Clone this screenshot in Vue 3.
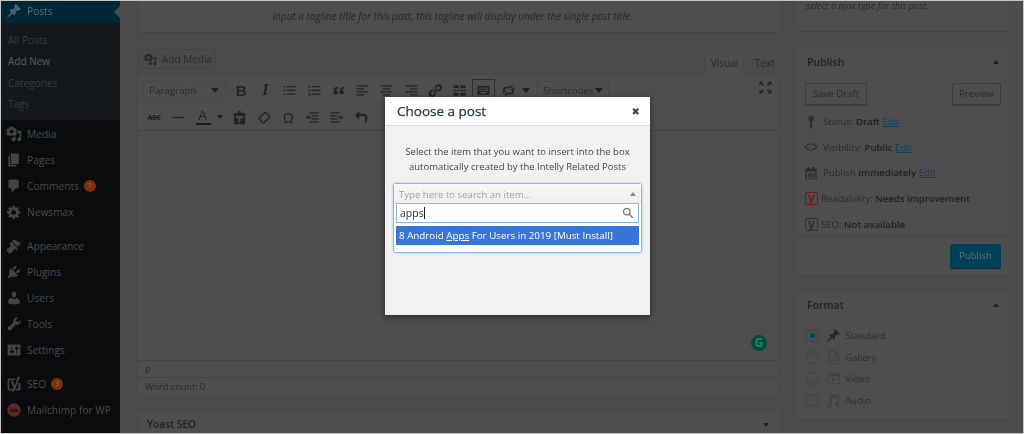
<script setup>
const d = {
  pin: 'M10.44 3.02l1.82-1.82 6.36 6.35-1.83 1.82c-1.05-.68-2.48-.57-3.41.36l-.75.75c-.92.93-1.04 2.35-.35 3.41l-1.83 1.82-2.41-2.41-2.8 2.79c-.42.42-3.38 2.71-3.8 2.29s1.86-3.39 2.28-3.81l2.79-2.79L4.1 9.36l1.83-1.82c1.05.69 2.48.57 3.41-.36l.75-.75c.93-.92 1.04-2.35.35-3.41z',
  media: 'M13 11V4c0-.55-.45-1-1-1h-1.67L9 1H5L3.67 3H2c-.55 0-1 .45-1 1v7c0 .55.45 1 1 1h10c.55 0 1-.45 1-1zM7 4.5c1.38 0 2.5 1.12 2.5 2.5S8.38 9.5 7 9.5 4.5 8.38 4.5 7 5.62 4.5 7 4.5zM14 6h5v10.5c0 1.38-1.12 2.5-2.5 2.5S14 17.88 14 16.5s1.12-2.5 2.5-2.5c.17 0 .34.02.5.05V9h-3V6zm-4 8.05V13h2v3.5c0 1.38-1.12 2.5-2.5 2.5S7 17.88 7 16.5 8.12 14 9.5 14c.17 0 .34.02.5.05z',
  pages: 'M6 15V2h10v13H6zm-1 1h8v2H3V5h2v11z',
  comments: 'M5 2h9c1.1 0 2 .9 2 2v7c0 1.1-.9 2-2 2h-2l-5 5v-5H5c-1.1 0-2-.9-2-2V4c0-1.1.9-2 2-2z',
  gear: 'M18 12h-2.18c-.17.7-.44 1.35-.81 1.93l1.54 1.54-2.1 2.1-1.54-1.54c-.58.36-1.23.63-1.91.79V19H8v-2.18c-.68-.16-1.33-.43-1.91-.79l-1.54 1.54-2.12-2.12 1.54-1.54c-.36-.58-.63-1.23-.79-1.91H1V9.03h2.17c.16-.7.44-1.35.8-1.94L2.43 5.55l2.1-2.1 1.54 1.54c.58-.37 1.24-.64 1.93-.81V2h3v2.18c.68.16 1.33.43 1.91.79l1.54-1.54 2.12 2.12-1.54 1.54c.36.59.64 1.24.8 1.94H18V12zm-8.5 1.5c1.66 0 3-1.34 3-3s-1.34-3-3-3-3 1.34-3 3 1.34 3 3 3z',
  brush: 'M14.48 11.06L7.41 3.99l1.5-1.5c.5-.56 2.3-.47 3.51.32 1.21.8 1.43 1.28 2.91 2.1 1.18.64 2.45 1.26 4.45.85zm-.71.71L6.7 4.7 4.93 6.47c-.39.39-.39 1.02 0 1.41l1.06 1.06c.39.39.39 1.03 0 1.42-.6.6-1.43 1.11-2.21 1.69-.35.26-.7.53-1.01.84C1.43 13.23.4 14.08 1.2 15.8c.8 1.7 1.6 2.5 3.3 3.3s2.26-.6 3.56-1.9c.3-.3.57-.66.83-1.01.57-.8 1.08-1.62 1.69-2.22.39-.39 1.02-.39 1.41 0l1.06 1.06c.39.39 1.02.39 1.41 0z',
  plug: 'M13.11 4.36L9.87 7.6 8 5.73l3.24-3.24c.35-.34 1.05-.2 1.56.32.52.51.66 1.21.31 1.55zm-8 1.77l.91-1.12 9.01 9.01-1.19.84c-.71.71-2.63 1.16-3.82 1.16H6.14L4.9 17.26c-.59.59-1.54.59-2.12 0-.59-.58-.59-1.53 0-2.12l1.24-1.24v-3.88c0-1.13.4-3.19 1.09-3.89zm7.26 3.97l3.24-3.24c.34-.35 1.04-.21 1.55.31.52.51.66 1.21.31 1.55l-3.24 3.25z',
  user: 'M10 9.25c-2.27 0-2.73-3.44-2.73-3.44C7 4.02 7.82 2 9.97 2c2.16 0 2.98 2.02 2.71 3.81 0 0-.41 3.44-2.68 3.44zm0 2.57L12.72 10c2.39 0 4.52 2.33 4.52 4.53v2.49s-3.65 1.13-7.24 1.13c-3.65 0-7.24-1.13-7.24-1.13v-2.49c0-2.25 1.94-4.48 4.47-4.48z',
  wrench: 'M16.68 9.77c-1.34 1.34-3.3 1.67-4.95.99l-5.41 6.52c-.99.99-2.59.99-3.58 0s-.99-2.59 0-3.57l6.52-5.42c-.68-1.65-.35-3.61.99-4.95 1.28-1.28 3.12-1.62 4.72-1.06l-2.89 2.89 2.82 2.82 2.86-2.87c.53 1.58.18 3.39-1.08 4.65z',
  settings: 'M18 16V4c0-.55-.45-1-1-1H3c-.55 0-1 .45-1 1v12c0 .55.45 1 1 1h14c.55 0 1-.45 1-1zM8 11h1c.55 0 1 .45 1 1s-.45 1-1 1H8v1.5c0 .28-.22.5-.5.5s-.5-.22-.5-.5V13H6c-.55 0-1-.45-1-1s.45-1 1-1h1V5.5c0-.28.22-.5.5-.5s.5.22.5.5V11zm5-2h-1c-.55 0-1-.45-1-1s.45-1 1-1h1V5.5c0-.28.22-.5.5-.5s.5.22.5.5V7h1c.55 0 1 .45 1 1s-.45 1-1 1h-1v5.5c0 .28-.22.5-.5.5s-.5-.22-.5-.5V9z',
  yoast: 'M2 4.500C2 3.700 2.700 3 3.500 3H12l-.8 2H4v11h4.500l-1 2h-4C2.700 18 2 17.300 2 16.500zM14.200 1h3.300L11.500 16.500C10.800 18.300 9.300 19.500 7.500 19.500v-2.800c1 0 1.700-.5 2-1.300L5.500 6h3.100l2.500 6.500zM15.500 8.500H18v8c0 .8-.7 1.500-1.500 1.500H12v-2h3.500z',
  mc: 'M10 1.500a8.500 8.500 0 1 0 0 17 8.500 8.500 0 0 0 0-17zM4.500 13l2-5 2 3.500L10.500 7.500l1.500 3.500 1.500-2 2.500 3-1 .5-1.500-1.500-1.500 2-1.500-3-2 3.500-2-3.500-1.500 3.500z',
  ul: 'M2 4h2v2H2zM6 4h12v1.600H6zM2 9h2v2H2zM6 9h12v1.600H6zM2 14h2v2H2zM6 14h12v1.600H6z',
  ol: 'M2 3h1.500v3.500H2zM6 4h12v1.600H6zM2 9h2.500v1H3v.5h1.500v1H2zM6 9h12v1.600H6zM2 14h2.500v3.500H2v-1h1.500v-.3H2v-.9h1.500V15H2zM6 14h12v1.600H6z',
  quote: 'M9 5v2.500C6.800 8 6.500 9.200 6.500 10H9v5H3.500v-5C3.500 7 5.500 5 9 5zm8 0v2.500c-2.200.5-2.500 1.700-2.500 2.500H17v5h-5.500v-5C11.500 7 13.500 5 17 5z',
  left: 'M2 3h16v1.800H2zM2 7h10v1.800H2zM2 11h16v1.800H2zM2 15h10v1.800H2z',
  center: 'M2 3h16v1.800H2zM5 7h10v1.800H5zM2 11h16v1.800H2zM5 15h10v1.800H5z',
  right: 'M2 3h16v1.800H2zM8 7h10v1.800H8zM2 11h16v1.800H2zM8 15h10v1.800H8z',
  link: 'M17.740 2.760c1.680 1.690 1.680 4.410 0 6.100l-1.530 1.520c-1.120 1.130-2.700 1.510-4.130 1.160l2.240-2.240.96-.96c.92-.92.92-2.410 0-3.330s-2.410-.92-3.330 0l-.96.96-2.240 2.240c-.35-1.430.03-3.010 1.160-4.130l1.520-1.530c1.690-1.680 4.410-1.680 6.100 0zM8.170 13.300l5.130-5.130-1.470-1.470-5.130 5.130zM2.260 17.240c-1.680-1.690-1.680-4.410 0-6.100l1.530-1.520c1.120-1.130 2.700-1.510 4.130-1.160l-2.240 2.240-.96.96c-.92.92-.92 2.410 0 3.330s2.410.92 3.330 0l.96-.96 2.240-2.240c.35 1.430-.03 3.010-1.160 4.130l-1.520 1.530c-1.690 1.680-4.410 1.680-6.100 0z',
  more: 'M2 3h7v4H2zM11 3h7v4h-7zM1 9.200h18v1.600H1zM2 13h7v4H2zM11 13h7v4h-7z',
  kitchen: 'M2 4h16v12H2zM4 6v1.500h2V6zM7 6v1.500h2V6zM10 6v1.500h2V6zM13 6v1.500h3V6zM4 9v1.500h2V9zM7 9v1.500h2V9zM10 9v1.500h2V9zM13 9v1.500h3V9zM6 12v2h8v-2z',
  loop: 'M3 12V7.500C3 6.100 4.100 5 5.500 5H13V2.500l4.500 3.500L13 9.500V7H5.500v5h2.200L4.200 16 1 12zM17 8v4.500c0 1.400-1.100 2.500-2.500 2.500H7v2.500L2.500 14 7 10.500V13h7.500V8h-2.200L15.800 4 19 8z',
  hr: 'M2 9h16v2H2z',
  paste: 'M8 1.500h4v2.500h4.500c.6 0 1 .4 1 1v13c0 .6-.4 1-1 1h-13c-.6 0-1-.4-1-1V5c0-.6.4-1 1-1H8zM5 8v3h4v6h2v-6h4V8z',
  eraser: 'M12.500 2.500 17.500 7.500c.8.8.8 2 0 2.800L10 17.800c-.8.800-2 .800-2.800 0l-5-5c-.8-.8-.8-2 0-2.800L9.700 2.500c.8-.8 2-.8 2.800 0zM11.100 3.900 3.600 11.400l5 5 7.500-7.500z',
  outdent: 'M6 3h12v1.800H6zM9 7h9v1.800H9zM1 10l4-3v2h3v1.800H5v2zM9 11h9v1.800H9zM6 15h12v1.800H6z',
  indent: 'M2 3h12v1.800H2zM2 7h9v1.800H2zM19 10l-4-3v2h-3v1.800h3v2zM2 11h9v1.800H2zM2 15h12v1.800H2z',
  undo: 'M12 5H7V1.500L1 7l6 5.500V8h5c2 0 3 1.500 3 3.500 0 2-.5 4.500-1 6.500 3-2 4-5 4-7.500C18 7.500 15.500 5 12 5z',
  full: 'M2 2h5L5.300 3.700 8 6.500 6.500 8 3.700 5.300 2 7zM18 2v5l-1.700-1.700L13.500 8 12 6.500l2.700-2.800L13 2zM2 18v-5l1.700 1.700L6.500 12 8 13.500l-2.700 2.800L7 18zM18 18h-5l1.700-1.700L12 13.500l1.500-1.500 2.800 2.700L18 13z',
  key: 'M10 1a4.200 4.200 0 0 1 1.200 8.200V19.500H8.800V9.200A4.200 4.200 0 0 1 10 1zM8.800 3.500a1.100 1.100 0 1 0 0 2.200 1.100 1.100 0 0 0 0-2.200z',
  eye: 'M19.500 10C15.800 4.500 8.500 3.300 3.500 7 2.300 7.800 1.300 8.800.5 10c3.700 5.500 11 6.700 16 3 1.200-.8 2.200-1.800 3-3zM10 6a4 4 0 1 1 0 8 4 4 0 0 1 0-8zM2.800 10c1-1.400 2.300-2.400 3.900-3A5 5 0 0 0 6.800 13c-1.600-.6-3-1.600-4-3zm10.400-3c1.600.6 3 1.600 4 3-1 1.400-2.300 2.400-3.900 3a5 5 0 0 0-.1-6z',
  cal: 'M15 4h3v15H2V4h3V3c0-.41.15-.76.44-1.060.29-.29.65-.44 1.060-.44s.77.15 1.060.44c.29.3.44.65.44 1.060v1h4V3c0-.41.15-.76.44-1.060.29-.29.65-.44 1.060-.44s.77.15 1.060.44c.29.3.44.65.44 1.060v1zM4 18h12V8H4zM6 10h2v6H6zm3 0h2v6H9zm3 0h2v6h-2z',
  gallery: 'M13 1l5 5v13H3V1zm-1.500 1.500H4.500v15h12v-10h-5zM6.500 15v-4H8v4zm3 0V8H11v7zm3 0v-5H14v5z',
  video: 'M1.500 2.500h17v15h-17zm1.500 4.500v9h14V7zM8 8.500l5.500 3L8 14.500z',
  audio: 'M18 1.500V15a3 3 0 1 1-2.500-2.950V7H8v9.500a3 3 0 1 1-2.500-2.950V1.500z'
}
const subs = [
  { t: 'All Posts' }, { t: 'Add New', on: true }, { t: 'Categories' }, { t: 'Tags' }
]
const groups = [
  [{ i: 'media', t: 'Media' }, { i: 'pages', t: 'Pages' }, { i: 'comments', t: 'Comments', b: '1' }, { i: 'gear', t: 'Newsmax' }],
  [{ i: 'brush', t: 'Appearance' }, { i: 'plug', t: 'Plugins' }, { i: 'user', t: 'Users' }, { i: 'wrench', t: 'Tools' }, { i: 'settings', t: 'Settings' }],
  [{ i: 'yoast', t: 'SEO', b: '3' }, { i: 'mc', t: 'Mailchimp for WP', red: true }]
]
const row1 = ['B', 'I', 'ul', 'ol', 'quote', 'left', 'center', 'right', 'link', 'more', 'kitchen', 'loop']
const formats = [
  { t: 'Standard', i: 'pin', on: true },
  { t: 'Gallery', i: 'gallery' },
  { t: 'Video', i: 'video' },
  { t: 'Audio', i: 'audio' }
]
</script>

<template>
  <div class="root">
    <div class="page">
      <aside class="side">
        <div class="cur">
          <svg class="mi curi" viewBox="0 0 20 20"><path :d="d.pin" /></svg>
          <span>Posts</span>
        </div>
        <div class="subs">
          <div v-for="s in subs" :key="s.t" class="sub" :class="{ on: s.on }">{{ s.t }}</div>
        </div>
        <div v-for="(g, n) in groups" :key="n" class="grp">
          <div v-for="m in g" :key="m.t" class="mrow">
            <svg class="mi" :class="{ red: m.red }" viewBox="0 0 20 20"><path fill-rule="evenodd" :d="d[m.i]" /></svg>
            <span>{{ m.t }}</span>
            <b v-if="m.b" class="bdg">{{ m.b }}</b>
          </div>
        </div>
      </aside>

      <main class="main">
        <section class="col">
          <div class="card tag">input a tagline title for this post, this tagline will display under the single post title.</div>
          <div class="edhead">
            <div class="addm">
              <svg class="ic15" viewBox="0 0 20 20"><path :d="d.media" /></svg>
              <span>Add Media</span>
            </div>
            <div class="tabs">
              <span class="tab act">Visual</span>
              <span class="tab">Text</span>
            </div>
          </div>
          <div class="editor">
            <div class="tools">
              <div class="tr">
                <div class="para"><span>Paragraph</span><i class="dn"></i></div>
                <template v-for="k in row1" :key="k">
                  <span v-if="k === 'B'" class="tb lt bold">B</span>
                  <span v-else-if="k === 'I'" class="tb lt ital">I</span>
                  <span v-else class="tb" :class="{ box: k === 'kitchen' }">
                    <svg class="ic" viewBox="0 0 20 20"><path fill-rule="evenodd" :d="d[k]" /></svg>
                  </span>
                </template>
                <i class="dn after"></i>
                <div class="short"><span>Shortcodes</span><i class="dn"></i></div>
                <svg class="ic fs" viewBox="0 0 20 20"><path :d="d.full" /></svg>
              </div>
              <div class="tr r2">
                <span class="tb abc">ABC</span>
                <span class="tb"><svg class="ic" viewBox="0 0 20 20"><path :d="d.hr" /></svg></span>
                <span class="tb colr">A<i class="under"></i></span>
                <i class="dn colarrow"></i>
                <span class="tb"><svg class="ic" viewBox="0 0 20 20"><path fill-rule="evenodd" :d="d.paste" /></svg></span>
                <span class="tb"><svg class="ic" viewBox="0 0 20 20"><path fill-rule="evenodd" :d="d.eraser" /></svg></span>
                <span class="tb lt omega">Ω</span>
                <span class="tb"><svg class="ic" viewBox="0 0 20 20"><path :d="d.outdent" /></svg></span>
                <span class="tb"><svg class="ic" viewBox="0 0 20 20"><path :d="d.indent" /></svg></span>
                <span class="tb"><svg class="ic" viewBox="0 0 20 20"><path :d="d.undo" /></svg></span>
              </div>
            </div>
            <div class="area">
              <span class="gram"><span>G</span></span>
            </div>
            <div class="path">p</div>
            <div class="wc">Word count: 0</div>
          </div>
          <div class="card yoast">
            <b>Yoast SEO</b>
            <i class="dn"></i>
          </div>
        </section>

        <section class="rail">
          <div class="card ajax">select a ajax type for this post.</div>
          <div class="card pub">
            <div class="chead"><b>Publish</b><i class="up"></i></div>
            <div class="btns">
              <span class="btn">Save Draft</span>
              <span class="btn">Preview</span>
            </div>
            <div class="st"><svg class="ic si" viewBox="0 0 20 20"><path fill-rule="evenodd" :d="d.key" /></svg><span>Status: <b>Draft</b> <a>Edit</a></span></div>
            <div class="st"><svg class="ic si" viewBox="0 0 20 20"><path fill-rule="evenodd" :d="d.eye" /></svg><span>Visibility: <b>Public</b> <a>Edit</a></span></div>
            <div class="st"><svg class="ic si" viewBox="0 0 20 20"><path fill-rule="evenodd" :d="d.cal" /></svg><span>Publish <b>immediately</b> <a>Edit</a></span></div>
            <div class="st yo"><span class="yb redb">y</span><span>Readability: <b>Needs improvement</b></span></div>
            <div class="st yo"><span class="yb">y</span><span>SEO: <b>Not available</b></span></div>
            <div class="pfoot"><span class="pbtn">Publish</span></div>
          </div>
          <div class="card fmt">
            <div class="chead"><b>Format</b><i class="up"></i></div>
            <div class="fbody">
              <div v-for="f in formats" :key="f.t" class="frow">
                <i class="radio" :class="{ on: f.on }"></i>
                <svg class="fi" :class="{ on: f.on }" viewBox="0 0 20 20"><path fill-rule="evenodd" :d="d[f.i]" /></svg>
                <span>{{ f.t }}</span>
              </div>
            </div>
          </div>
        </section>
      </main>
    </div>

    <div class="modal">
      <header class="mh">
        <h2>Choose a post</h2>
        <span class="x">✖</span>
      </header>
      <div class="mb">
        <p>Select the item that you want to insert into the box<br />automatically created by the Intelly Related Posts</p>
        <div class="chosen">
          <div class="ph"><span>Type here to search an item...</span><i class="mini"></i></div>
          <div class="srch">
            <span class="typed">apps</span>
            <svg class="lens" viewBox="0 0 14 14"><circle cx="5.500" cy="5.500" r="3.800" /><path d="M8.500 8.500 12.500 12.500" /></svg>
          </div>
          <div class="res">8 Android <u>Apps</u> For Users in 2019 [Must Install]</div>
        </div>
      </div>
    </div>
  </div>
</template>

<style>
html, body { margin: 0; background: #4b4b4b; }
</style>

<style scoped>
.root {
  position: relative;
  width: 1024px;
  height: 434px;
  box-sizing: border-box;
  border: 1px solid #c4c4c4;
  overflow: hidden;
  font-family: "Open Sans", sans-serif;
  font-size: 10px;
  color: #2e2e2e;
  background: #4b4b4b;
}
.page { display: flex; height: 100%; filter: blur(.6px); }
.side { width: 119px; flex: none; background: #0a0c0e; color: #484a4c; font-size: 10.200px; }
.cur { height: 22px; background: #012636; display: flex; align-items: center; color: #587079; position: relative; padding: 0 0 2px 5px; box-sizing: border-box; gap: 5px; }
.cur::after { content: ""; position: absolute; right: 0; top: 5px; border: 6px solid transparent; border-right-color: #4b4b4b; border-left-width: 0; }
.mi { width: 16px; height: 16px; fill: #414446; flex: none; }
.curi { fill: #4a636f; }
.mi.red { fill: #622420; }
.subs { background: #14181b; padding: 7px 0 5px; height: 97px; box-sizing: border-box; margin-bottom: 1px; }
.sub { height: 21.400px; line-height: 21px; padding-left: 7px; color: #393c3f; font-size: 10px; }
.sub.on { color: #5a5c5e; }
.grp { margin-bottom: 8px; }
.mrow { height: 26px; display: flex; align-items: center; gap: 5px; padding-left: 5px; }
.bdg { width: 12px; height: 12px; border-radius: 50%; background: #7d2e0e; color: #a37a63; font-size: 7px; font-weight: 400; text-align: center; line-height: 12px; }

.main { flex: 1; display: flex; gap: 18px; padding-left: 18px; min-width: 0; }
.col { width: 641px; flex: none; }
.rail { width: 212px; flex: none; }
.card { background: #4e4e4e; box-shadow: 0 1px 0 #444; }
.tag { height: 31px; box-sizing: border-box; padding: 8px 12px 0 0; text-align: center; font-style: italic; font-size: 10px; color: #282828; }
.edhead { display: flex; justify-content: space-between; align-items: flex-end; margin-top: 17px; height: 26px; }
.addm { width: 78px; height: 20px; box-sizing: border-box; border: 1px solid #444; border-radius: 3px; display: flex; align-items: center; gap: 5px; padding-left: 5px; align-self: flex-start; color: #2c2c2c; font-size: 10px; }
.ic15 { width: 13px; height: 13px; fill: #2b2b2b; }
.tabs { display: flex; gap: 4px; margin-right: -3px; }
.tab { height: 22px; padding: 0 6px; box-sizing: border-box; line-height: 19px; color: #2b2b2b; border: 1px solid #4a4a4a; border-bottom: 0; font-size: 10.200px; }
.tab.act { background: #4e4e4e; padding: 0 0 0 2px; width: 38px; text-align: center; margin-right: 1px; }
.editor { background: #4e4e4e; box-shadow: 0 0 0 1px #484848; width: 640px; }
.tools { height: 56px; border-bottom: 1px solid #424242; box-sizing: border-box; padding: 5px 0 0 4px; position: relative; }
.tr { display: flex; align-items: center; height: 20px; }
.r2 { margin-top: 7px; }
.para { width: 84px; height: 19px; box-sizing: border-box; border: 1px solid #484848; display: flex; align-items: center; justify-content: space-between; padding: 0 6px 0 6px; color: #2b2b2b; margin-right: 3px; font-size: 9.800px; }
.dn { width: 0; height: 0; border: 4px solid transparent; border-top: 5px solid #222; border-bottom: 0; flex: none; }
.tb { width: 24.300px; height: 20px; display: flex; align-items: center; justify-content: center; flex: none; color: #232323; }
.ic { width: 15px; height: 15px; fill: #262626; }
.lt { font-family: "Liberation Sans", sans-serif; font-size: 15px; }
.bold { font-weight: 700; }
.ital { font-style: italic; font-family: "Liberation Serif", serif; font-weight: 700; font-size: 16px; }
.box { box-shadow: 0 0 0 1px #2f2f2f; width: 21px; margin: 0 2px 0 1px; }
.after { margin: 0 4px 0 2px; }
.short { width: 73px; height: 19px; box-sizing: border-box; margin-left: 2px; border: 1px solid #484848; display: flex; align-items: center; justify-content: space-between; padding: 0 5px 0 6px; color: #2b2b2b; font-size: 9.500px; }
.fs { position: absolute; right: 5px; top: 5px; }
.abc { font-size: 6.500px; font-weight: 700; text-decoration: line-through; }
.colr { position: relative; font-family: "Liberation Sans", sans-serif; font-size: 13px; padding-bottom: 3px; box-sizing: border-box; width: 24px; }
.under { position: absolute; left: 5px; right: 4px; bottom: 2px; height: 2px; background: #1c1c1c; }
.colarrow { margin: 0 5px 0 2px; border-width: 4px 3px 0 3px; }
.omega { font-size: 15px; }
.area { height: 229px; box-sizing: border-box; position: relative; }
.gram { position: absolute; right: 11px; bottom: 9px; width: 16px; height: 16px; border-radius: 50%; background: #024f3f; color: #3f7767; font-size: 12px; font-weight: 700; line-height: 16px; text-align: center; }
.path { height: 16px; border-top: 1px solid #444; line-height: 15px; padding-left: 7px; font-size: 9.500px; color: #2a2a2a; }
.wc { height: 17px; border-top: 1px solid #444; padding-left: 7px; line-height: 17px; font-size: 9.200px; color: #2a2a2a; }
.yoast { margin-top: 16px; height: 40px; display: flex; justify-content: space-between; padding: 6px 10px 0 9px; box-sizing: border-box; font-size: 10.200px; color: #222; }
.yoast b { font-weight: 600; }
.yoast .dn { margin-top: 6px; border-width: 4px 3px 0; }
.ajax { height: 30px; padding-left: 9px; font-style: italic; font-size: 9.200px; line-height: 9px; box-sizing: border-box; color: #2a2a2a; }
.pub { margin-top: 17px; height: 227px; position: relative; }
.chead { height: 27px; display: flex; justify-content: space-between; align-items: center; padding: 1px 10px 0 10px; font-size: 10.500px; color: #242424; border-bottom: 1px solid #4a4a4a; box-sizing: border-box; }
.chead b { font-weight: 600; }
.up { width: 0; height: 0; border: 3px solid transparent; border-bottom: 4px solid #222; border-top: 0; }
.btns { display: flex; justify-content: space-between; padding: 8px 8px 0; height: 23px; margin-bottom: 3px; }
.btn { height: 22px; box-sizing: border-box; border: 1px solid #3e3e3e; border-radius: 2px; padding: 0 6px; line-height: 20px; color: #2a2a2a; box-shadow: 0 1px 0 #3f3f3f; font-size: 9.600px; }
.btn:first-child { width: 62px; text-align: center; padding: 0; }
.st { height: 25.600px; display: flex; align-items: center; gap: 5px; padding-left: 8px; color: #2c2c2c; font-size: 9.600px; }
.st b { font-weight: 600; color: #222; }
.st a { color: #0a4258; text-decoration: underline; }
.si { width: 14px; height: 14px; fill: #2e2e2e; flex: none; margin-left: -1px; }
.yo { gap: 3px; }
.yb { width: 13px; height: 13px; box-sizing: border-box; border: 1px solid #333; border-radius: 2px; line-height: 10px; text-align: center; font-weight: 700; color: #333; font-size: 12px; flex: none; }
.redb { color: #741a1a; border-color: #741a1a; }
.pfoot { position: absolute; left: 0; right: 0; bottom: 0; height: 39px; border-top: 1px solid #444; display: flex; justify-content: flex-end; padding: 7px 8px 0 0; box-sizing: border-box; }
.pbtn { width: 51px; height: 24px; border-radius: 3px; background: #003f55; color: #4f7585; text-align: center; line-height: 23px; font-size: 9.600px; box-shadow: 0 1px 0 #02303f; }
.fmt { margin-top: 17px; height: 127px; }
.fmt .chead { height: 26px; }
.fbody { padding-top: 7px; }
.frow { height: 21.600px; display: flex; align-items: center; color: #2e2e2e; font-size: 9.600px; padding-left: 9px; }
.radio { width: 11px; height: 11px; border: 1px solid #424242; border-radius: 50%; position: relative; flex: none; margin-right: 7px; }
.radio.on::after { content: ""; position: absolute; left: 3px; top: 3px; width: 5px; height: 5px; background: #024563; border-radius: 50%; }
.fi { width: 15px; height: 15px; fill: #444; margin-right: 4px; flex: none; }
.fi.on { fill: #292929; }

.modal { position: absolute; left: 384px; top: 96px; width: 265px; height: 218px; background: #f1f1f1; box-shadow: 0 2px 6px rgba(0, 0, 0, .5); filter: blur(.3px); }
.mh { height: 28px; background: #fff; border-bottom: 1px solid #dcdcdc; display: flex; justify-content: space-between; align-items: center; padding: 0 10px 0 12px; }
.mh h2 { margin: 0; font-size: 13.500px; font-weight: 400; color: #2b3a40; -webkit-text-stroke: .25px #2b3a40; }
.x { font-size: 10px; color: #444; font-family: "DejaVu Sans", sans-serif; }
.mb { padding: 18px 8px 0; }
.mb p { margin: 0; text-align: center; font-size: 9.500px; line-height: 15px; color: #444; }
.chosen { margin-top: 9px; height: 70px; box-sizing: border-box; background: #fff; border: 1px solid #8fb8ea; border-radius: 3px; box-shadow: 0 0 3px rgba(80, 140, 220, .4); padding: 0 2px; }
.ph { height: 20px; display: flex; justify-content: space-between; align-items: center; color: #a3a3a3; background: linear-gradient(#f6f6f6, #eee); margin: 0 -2px -1px; padding: 0 5px 0 5px; font-size: 9.600px; }
.mini { width: 0; height: 0; border: 3px solid transparent; border-bottom: 4px solid #888; border-top: 0; }
.srch { height: 20px; box-sizing: border-box; border: 1px solid #8fb8ea; display: flex; align-items: center; justify-content: space-between; padding: 0 4px 0 3px; background: #fff; color: #333; font-size: 10.500px; position: relative; }
.typed { border-right: 1px solid #222; line-height: 12px; }
.lens { width: 12px; height: 12px; fill: none; stroke: #777; stroke-width: 1.500; }
.res { margin-top: 3px; height: 19px; background: #3875d7; color: #fff; line-height: 19px; padding-left: 3px; font-size: 9.800px; }
</style>
